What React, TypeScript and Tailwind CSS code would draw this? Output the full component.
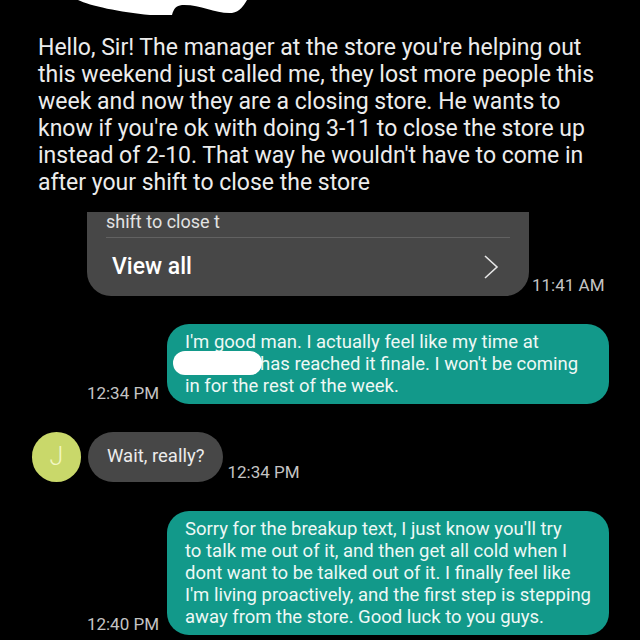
import React from 'react';

const font = { fontFamily: 'Roboto, "Noto Sans", sans-serif' };

const intro = [
  "Hello, Sir! The manager at the store you're helping out",
  'this weekend just called me, they lost more people this',
  'week and now they are a closing store. He wants to',
  "know if you're ok with doing 3-11 to close the store up",
  "instead of 2-10. That way he wouldn't have to come in",
  'after your shift to close the store',
];

const breakup = [
  "Sorry for the breakup text, I just know you'll try",
  'to talk me out of it, and then get all cold when I',
  'dont want to be talked out of it. I finally feel like',
  "I'm living proactively, and the first step is stepping",
  'away from the store. Good luck to you guys.',
];

function Stamp({ children, className = '' }: { children: React.ReactNode; className?: string }) {
  return <div className={`text-[17px] leading-[20px] text-[#c4c4c4] whitespace-nowrap ${className}`}>{children}</div>;
}

export default function App() {
  return (
    <div className="w-[640px] h-[640px] bg-black overflow-hidden flex flex-col" style={font}>
      <div className="h-[20px] shrink-0">
        <svg width="640" height="20" viewBox="0 0 640 20">
          <path d="M78 0 C 90 6, 120 12, 150 15 L 172 15 C 174 8, 176 6, 182 5 C 200 4, 215 14, 232 13 C 240 12, 244 5, 247 0 Z" fill="#fff" />
        </svg>
      </div>

      <div className="mt-[14px] pl-[38px] text-[23px] leading-[27px] text-[#ececec]">
        {intro.map((l) => (
          <div key={l} className="whitespace-nowrap">{l}</div>
        ))}
      </div>

      <div className="mt-[16px] flex items-end">
        <div className="ml-[87px] w-[442px] h-[84px] bg-[#474747] rounded-b-[24px] overflow-hidden flex flex-col">
          <div className="pl-[19px] text-[18px] leading-[19px] text-[#e2e2e2]">shift to close t</div>
          <div className="mx-[19px] mt-[6px] h-[1px] bg-[#626262]" />
          <div className="flex items-center justify-between pl-[25px] pr-[30px] h-[58px]">
            <span className="text-[23px] font-medium text-white">View all</span>
            <svg width="16" height="26" viewBox="0 0 16 26">
              <polyline points="2,2 14,13 2,24" fill="none" stroke="#e6e6e6" strokeWidth="1.6" />
            </svg>
          </div>
        </div>
        <Stamp className="ml-[3px] mb-[1px]">11:41 AM</Stamp>
      </div>

      <div className="mt-[28px] flex items-end">
        <Stamp className="w-[160px] text-right pr-[1px] mb-[1px]">12:34 PM</Stamp>
        <div className="relative ml-[7px] w-[442px] bg-[#12998a] rounded-[22px] pl-[18px] py-[7px] text-[18.5px] leading-[22px] text-[#eef8f5]">
          <div className="whitespace-nowrap">I'm good man. I actually feel like my time at</div>
          <div className="whitespace-nowrap"><span className="inline-block w-[75px]" />has reached it finale. I won't be coming</div>
          <div className="whitespace-nowrap">in for the rest of the week.</div>
          <div className="absolute left-[6px] top-[27px] w-[89px] h-[24px] bg-white rounded-[12px]" />
        </div>
      </div>

      <div className="mt-[28px] flex items-end">
        <div className="ml-[32px] w-[49px] h-[50px] rounded-full bg-[#c9d86a] flex items-center justify-center text-[25px] font-light text-[#f2f7c4]">J</div>
        <div className="ml-[7px] h-[50px] px-[19px] rounded-full bg-[#474747] flex items-center text-[18.5px] text-[#ececec]">Wait, really?</div>
        <Stamp className="ml-[4px]">12:34 PM</Stamp>
      </div>

      <div className="mt-[29px] flex items-end">
        <Stamp className="w-[160px] text-right pr-[1px] mb-[1px]">12:40 PM</Stamp>
        <div className="ml-[7px] w-[442px] bg-[#12998a] rounded-[22px] pl-[18px] py-[7px] text-[18.5px] leading-[22px] text-[#eef8f5]">
          {breakup.map((l) => (
            <div key={l} className="whitespace-nowrap">{l}</div>
          ))}
        </div>
      </div>
    </div>
  );
}
